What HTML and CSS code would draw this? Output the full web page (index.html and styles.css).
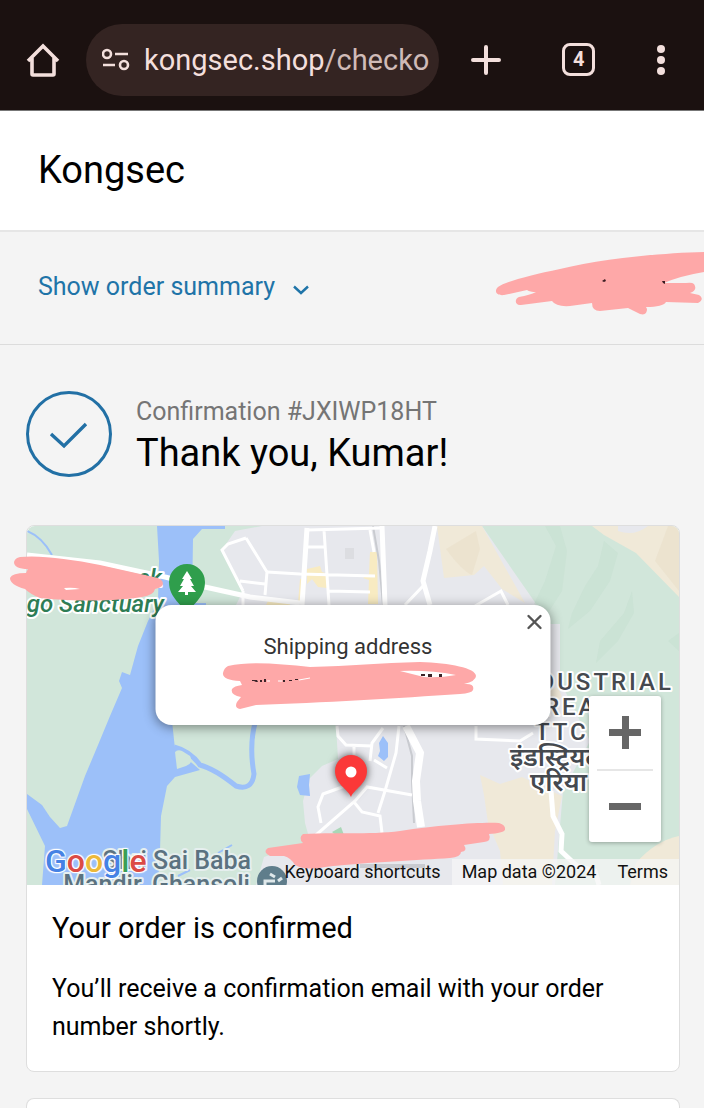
FILE: index.html
```html
<!DOCTYPE html>
<html lang="en">
<head>
    <meta charset="UTF-8">
    <meta name="viewport" content="width=device-width, initial-scale=1.0">
    <title>Kongsec - Thank you</title>
    <link rel="stylesheet" href="styles.css">
</head>
<body>
    <nav class="browser-bar">
        <button class="icon-btn home" aria-label="Home">
            <svg width="34" height="36" viewBox="0 0 34 36"><path d="M2 19 L17 4 L32 19 M6 16 V32 Q6 33 7 33 H27 Q28 33 28 32 V16" fill="none" stroke="#f3dfdc" stroke-width="3.6"/></svg>
        </button>
        <button class="address">
            <svg width="28" height="24" viewBox="0 0 28 24" fill="none" stroke="#f3dfdc" stroke-width="2.6"><circle cx="5" cy="6" r="4"/><path d="M13 6 H26 M1 17 H13"/><circle cx="22" cy="17" r="4"/></svg>
            <span>kongsec.shop<span class="path">/checko</span></span>
        </button>
        <div class="actions">
            <button class="icon-btn" aria-label="New tab">
                <svg width="30" height="30" viewBox="0 0 30 30"><path d="M15 2 V28 M2 15 H28" stroke="#f3dfdc" stroke-width="4" stroke-linecap="round"/></svg>
            </button>
            <button class="icon-btn tabs" aria-label="Tabs">4</button>
            <button class="icon-btn menu" aria-label="Menu">
                <svg width="10" height="30" viewBox="0 0 10 30" fill="#f3dfdc"><circle cx="5" cy="4" r="4"/><circle cx="5" cy="15" r="4"/><circle cx="5" cy="26" r="4"/></svg>
            </button>
        </div>
    </nav>

    <header class="header">
        <h1>Kongsec</h1>
    </header>

    <section class="summary">
        <button class="summary-toggle">
            Show order summary
            <svg width="16" height="10" viewBox="0 0 16 10"><path d="M1 1.5 L8 8 L15 1.5" fill="none" stroke="#1f74a8" stroke-width="2.4"/></svg>
        </button>
        <svg class="summary-mark" width="210" height="66" viewBox="494 250 210 66">
            <path fill="#fea8a8" d="M704 252 C660 253 600 259 560 269 C530 275 505 282 498 287 C493 292 498 296 504 295 L527 290 Q530 292 536 292 Q530 295 519 297 C514 299 515 306 521 305 L552 301 Q556 307 570 306 L592 303 Q592 311 600 311 L628 308 L640 314 Q647 316 647 309 L646 307 Q663 307 666 302 L698 303 Q705 299 699 295 L690 293 Q698 290 694 284 Q692 282 686 283 L664 283 Q680 276 704 272 Z"/>
            <path fill="#391b20" d="M602 281 l3 -2 l1 2 l-2 1 z M662 281 l3 0 l0 3 l-2 -1 z"/>
        </svg>
    </section>

    <main class="main">
        <div class="thanks">
            <svg width="86" height="86" viewBox="0 0 86 86" fill="none" stroke="#2270a5" stroke-width="3"><circle cx="43" cy="43" r="41.5"/><path d="M25 43 L38 55 L60 33" stroke-width="3.4"/></svg>
            <div class="thanks-text">
                <p class="confirmation">Confirmation #JXIWP18HT</p>
                <h2>Thank you, Kumar!</h2>
            </div>
        </div>

        <div class="card">
            <div class="map">
                <svg class="map-canvas" viewBox="27 525 652 359" preserveAspectRatio="xMidYMid slice">
                    <rect x="-400" y="525" width="1500" height="359" fill="#d1e6da"/>

                    <!-- built-up area -->
                    <path fill="#e7e8ed" d="M262 525 L235 530 L222 549 L243 590 L236 604 L336 725 L338 758 L322 765 L309 778 L303 800 L305 822 L310 840 L264 856 L256 884 H555 L563 790 L590 740 L560 680 V623 H550 L482 525 Z"/>
                    <path fill="#dcdde1" d="M345 547 h9 v11 h-9 z"/>

                    <!-- hills and sand -->
                    <g fill="#f0e9d8">
                        <path d="M437 525 H482 L525 602 L502 588 L484 565 L474 574 L444 577 Z"/>
                        <path d="M592 525 L604 534 L636 552 L679 596 V525 Z"/>
                        <path d="M480 774 L500 783 L522 776 L562 795 L555 830 L552 884 H503 L500 850 L488 822 L484 794 Z"/>
                        <path d="M636 862 Q655 840 679 835 V884 H630 Z"/>
                        <path d="M549 690 L558 686 L562 696 L550 704 Z"/>
                    </g>
                    <path fill="#e7e8ed" d="M618 525 H648 Q634 536 618 530 Z"/>
                    <path fill="#eadfc9" opacity=".6" d="M668 525 L655 560 L679 590 V525 Z M446 548 Q462 570 472 574 L480 548 L476 530 Z"/>
                    <g fill="#c5dfd0" opacity=".5">
                        <path d="M545 525 L556 545 L545 580 L534 603 L548 612 L562 590 L567 550 L560 525 Z"/>
                        <path d="M604 540 L598 565 L585 585 L572 612 L568 628 L590 610 L610 580 L618 552 Z"/>
                        <path d="M632 590 L624 612 L600 640 L596 662 L618 640 L634 612 Z M668 640 L679 632 V650 Z"/>
                    </g>

                    <!-- water -->
                    <g fill="#9cc0f9">
                        <path d="M157 525 L159 560 L158 600 L148 620 L138 645 L130 674 L122 671 L119 680 L122 687 L110 715 L98 744 L85 775 L67 825 L60 827 L50 816 L42 804 L27 793 V808 L45 845 L42 884 H158 L160 850 L161 815 L167 785 L175 776 L200 769 L192 762 L175 748 L172 720 L180 604 H206 V602 H192 L193 538 L202 528 H225 V525 Z"/>
                        <path d="M299 775 L310 773 L309 784 L310 795 L300 794 L297 786 Z"/>
                        <path d="M379 742 L383 735 L388 742 L388 756 L384 760 L378 755 L380 750 Z"/>
                    </g>
                    <path fill="none" stroke="#9cc0f9" stroke-width="5" d="M174 746 Q190 750 200 764 Q215 768 236 785 Q252 790 254 773 Q249 745 255 722"/>
                    <path fill="#d1e6da" d="M175 751 Q178 748 182 750 L190 755 Q194 762 186 765 L177 768 Z"/>
                    <path fill="none" stroke="#9cc0f9" stroke-width="2" d="M27 530 Q42 536 52 554 M178 875 L190 869 M218 852 L232 844"/>

                    <g fill="#f8ebc2">
                        <path d="M307 568 L320 565 L322 571 L328 573 L327 587 L318 586 L312 578 L307 583 Z M300 578 L306 578 L304 602 L298 602 Z"/>
                        <path d="M370 551 L377 551 L378 603 L368 603 L369 579 L363 577 L369 573 Z M268 600 L290 600 L290 604 L266 604 Z"/>
                    </g>
                    <path fill="#a9d7b7" d="M332 831 L341 826 L344 834 L338 836 Z"/>

                    <!-- roads -->
                    <g fill="none" stroke="#c9cbd0" stroke-width="2">
                        <path d="M373 525 L379 560 L383 604 M404 725 L412 755 L412 780 L414 822"/>
                        <path d="M360 865 H425" stroke-width="4"/>
                    </g>
                    <g fill="none" stroke="#fff" stroke-width="3">
                        <path d="M307 529 L382 527 M324 529 L329 604 M307 546 H326 M267 571 L300 573 L375 575 M329 590 L370 591 M370 529 L374 551"/>
                        <path d="M246 537 L228 543 L222 549 L243 590 M246 537 L267 571 L265 594 M240 580 L265 583 M243 590 V604"/>
                        <path d="M423 585 L405 604 M475 605 L501 590 L508 604 M476 725 V738 L520 740 L533 732"/>
                        <path d="M337 725 L338 735 L346 744 L372 745 M354 745 V757 M370 760 L372 742 L383 727 M374 759 L387 767"/>
                        <path d="M399 725 L396 752 L385 790 L378 812 M316 834 L355 800 L367 786 L412 794 M321 822 L318 806 L323 793 L345 785 M354 801 L362 811 L380 815 L382 832"/>
                    </g>
                    <g fill="none" stroke="#fff" stroke-width="5">
                        <path d="M27 554 L100 562 L165 576 L205 586 L250 596 L300 602"/>
                        <path d="M307 527 L302 604 M382 525 L385 604 M435 525 L430 550 L423 580 L430 604"/>
                        <path d="M551 790 L553 815 L562 833 L561 850 L577 865 L595 870 L599 884"/>
                        <path d="M406 725 L420 752 L416 780 L417 800 L421 826" stroke-width="8"/>
                    </g>

                    <!-- place labels -->
                    <g class="label park">
                        <text x="162" y="585" text-anchor="end">ek</text>
                        <text x="164" y="611" text-anchor="end">go Sanctuary</text>
                    </g>
                    <g class="label temple">
                        <text x="251" y="868" text-anchor="end">Shri Sai Baba</text>
                        <text x="250" y="892" text-anchor="end">Mandir, Ghansoli</text>
                    </g>
                    <g class="label area">
                        <text x="674" y="689" text-anchor="end">INDUSTRIAL</text>
                        <text x="525" y="714">AREA</text>
                        <text x="535" y="739">TTC</text>
                        <text class="hindi" x="510" y="765">इंडस्ट्रियल</text>
                        <text class="hindi" x="530" y="790">एरिया</text>
                    </g>

                    <!-- park and temple symbols -->
                    <path fill="#2f9e4c" d="M187 614 C184 604 169 598 169 581 A18 18 0 0 1 205 581 C205 598 190 604 187 614 Z"/>
                    <path fill="#fff" d="M187 570 L192 578 H190 L194 585 H191 L196 591 H188 V594 H185 V591 H178 L183 585 H180 L184 578 H182 Z"/>
                    <circle cx="272" cy="880" r="15" fill="#5f7d8b"/>
                    <path fill="none" stroke="#dfe8ea" stroke-width="3" d="M265 884 V880 H275 M270 873 L275 876 M278 880 L282 877"/>

                    <!-- drop pin -->
                    <g class="pin">
                        <path fill="#fb3838" d="M351 796 C348 788 335 783 335 770 A16 16 0 0 1 367 770 C367 783 354 788 351 796 Z"/>
                        <circle cx="351" cy="771" r="5.5" fill="#fff"/>
                    </g>
                </svg>

                <div class="google"><span class="blue">G</span><span class="red">o</span><span class="yellow">o</span><span class="blue">g</span><span class="green">l</span><span class="red">e</span></div>

                <div class="zoom">
                    <button aria-label="Zoom in"><svg width="32" height="33" viewBox="0 0 32 33"><path fill="#666" d="M13 0 h7 v13 h12 v7 h-12 v13 h-7 v-13 h-13 v-7 h13 z"/></svg></button>
                    <button aria-label="Zoom out"><svg width="32" height="33" viewBox="0 0 32 33"><path fill="#666" d="M0 13 h32 v7 h-32 z"/></svg></button>
                </div>

                <div class="attribution">
                    <button>Keyboard shortcuts</button>
                    <span>Map data ©2024</span>
                    <a href="#">Terms</a>
                </div>

                <div class="popup">
                    <p>Shipping address</p>
                    <button class="close" aria-label="Close">
                        <svg width="16" height="16" viewBox="0 0 16 16"><path d="M2 2 L14 14 M14 2 L2 14" stroke="#555" stroke-width="2.4" stroke-linecap="round"/></svg>
                    </button>
                </div>
            </div>

            <svg class="marks" viewBox="27 525 652 359" preserveAspectRatio="xMidYMid slice">
                <g fill="#fea8a8">
                    <path d="M20 556 C40 554 70 558 100 564 L158 577 Q165 580 162 585 Q160 587 155 588 Q154 594 142 596 C120 600 80 601 40 597 Q30 593 25 588 Q10 584 10 577 Q12 572 26 572 L28 568 Q14 568 14 561 Q15 557 20 556 Z"/>
                    <path d="M228 665 C250 660 280 663 310 666 C350 665 380 662 420 661 C450 662 476 667 476 675 Q476 680 464 683 Q475 682 473 689 Q472 692 460 693 C400 697 320 702 256 704 L240 708 Q234 707 237 701 L241 696 Q230 694 232 688 Q234 685 242 684 L240 680 Q222 679 223 672 Q224 667 228 665 Z"/>
                    <path d="M268 847 L303 842 Q298 837 303 833 C330 831 370 834 400 830 C440 824 480 821 499 822 Q506 824 505 829 Q503 832 489 833 Q492 840 484 841 L464 844 Q468 850 461 851 Q461 856 450 857 C420 859 370 861 325 866 Q305 870 295 864 Q291 857 284 855 L270 855 Q262 851 268 847 Z"/>
                </g>
                <path fill="#fff" d="M400 670 Q430 669 456 674 Q440 677 424 676 Z M64 587 Q73 586 80 588 L66 589 Z"/>
                <g fill="#3b2328">
                    <path d="M252 679 h5 l1 2 h-2 l-2 -1 h-2 z M260 679 h2 v2 h-2 z M264 678 h2 v3 h-2 z M283 679 h2 v2 h-2 z M289 679 h3 v1 h-3 z M295 678 h3 v1 h-3 z"/>
                    <path d="M421 673 h4 v2 h-4 z M428 673 h4 v3 h-4 z M439 673 h3 v3 h-3 z"/>
                </g>
                <path fill="none" stroke="#fff" d="M267 680 H270 M278 680 H282 M299 679 L310 677"/>
            </svg>

            <div class="card-body">
                <h3>Your order is confirmed</h3>
                <p>You’ll receive a confirmation email with your order number shortly.</p>
            </div>
        </div>

        <div class="card next"></div>
    </main>
</body>
</html>
```
FILE: styles.css
```css
* {
    margin: 0;
    padding: 0;
    box-sizing: border-box;
}

body {
    display: flex;
    flex-direction: column;
    min-height: 100vh;
    background: #f4f4f4;
    color: #000;
    font-family: Roboto, sans-serif;
    font-size: 25px;
    overflow-x: hidden;
}

button {
    background: none;
    border: none;
    color: inherit;
    font: inherit;
    cursor: pointer;
}

svg {
    display: block;
}

h1, h2, h3 {
    font-weight: 400;
}

/* Browser toolbar */
.browser-bar {
    display: flex;
    align-items: center;
    gap: 26px;
    height: 111px;
    padding: 9px 38px 0 26px;
    background: #1b1110;
    border-bottom: 1px solid #777;
}

.address {
    display: flex;
    align-items: center;
    gap: 14px;
    height: 72px;
    padding: 0 10px 0 16px;
    border-radius: 36px;
    background: #342422;
    color: #f3dfdc;
    font-size: 29px;
    white-space: nowrap;
}

.address .path {
    color: #d0bbb8;
}

.actions {
    flex: 1;
    display: flex;
    align-items: center;
    justify-content: space-between;
    padding-left: 6px;
}

.tabs {
    width: 33px;
    height: 33px;
    border: 3px solid #f3dfdc;
    border-radius: 8px;
    color: #f3dfdc;
    font-size: 20px;
    font-weight: 700;
    line-height: 27px;
}

/* Store header */
.header {
    height: 121px;
    padding: 37px 38px;
    background: #fff;
    border-bottom: 2px solid #e6e6e6;
}

.header h1 {
    font-size: 38px;
    line-height: 44px;
}

.summary {
    position: relative;
    height: 113px;
    padding: 38px;
    border-bottom: 1px solid #dcdcdc;
}

.summary-toggle {
    display: flex;
    align-items: center;
    gap: 18px;
    color: #1f74a8;
    font-size: 25px;
    line-height: 34px;
}

.summary-toggle svg {
    margin-top: 6px;
}

.summary-mark {
    position: absolute;
    top: 18px;
    right: 0;
}

/* Content */
.main {
    flex: 1;
    display: flex;
    flex-direction: column;
    padding: 45px 24px 0 26px;
}

.thanks {
    display: flex;
    align-items: center;
    gap: 24px;
    margin-bottom: 47px;
}

.thanks-text {
    padding-top: 6px;
}

.confirmation {
    color: #757575;
    font-size: 25px;
    line-height: 32px;
}

.thanks h2 {
    font-size: 38px;
    line-height: 50px;
}

.card {
    position: relative;
    margin-bottom: 26px;
    background: #fff;
    border: 1px solid #dedede;
    border-radius: 8px;
}

.card.next {
    flex: 1;
    min-height: 11px;
    margin-bottom: 0;
    border-bottom: none;
    border-radius: 8px 8px 0 0;
}

.card-body {
    padding: 24px 25px 25px;
}

.card-body h3 {
    margin-bottom: 23px;
    font-size: 29px;
    line-height: 38px;
}

.card-body p {
    line-height: 38px;
}

/* Map */
.map {
    position: relative;
    height: 359px;
    overflow: hidden;
    border-radius: 8px 8px 0 0;
}

.map-canvas {
    width: 100%;
    height: 100%;
}

.marks {
    position: absolute;
    top: 0;
    left: 0;
    width: 100%;
    height: 359px;
    overflow: visible;
    pointer-events: none;
}

.label {
    paint-order: stroke;
    stroke: #fff;
    stroke-width: 4px;
    stroke-linejoin: round;
    font-weight: 500;
}

.park {
    fill: #2e7d55;
    font-size: 24px;
    font-style: italic;
}

.temple {
    fill: #5b7280;
    stroke: #e6efef;
    font-size: 25px;
}

.area {
    fill: #45494f;
    font-size: 24px;
    letter-spacing: 3px;
}

.hindi {
    font-family: "Noto Sans", sans-serif;
    font-size: 26px;
    font-weight: 600;
    letter-spacing: 0;
}

.pin {
    filter: drop-shadow(0 0 4px rgba(0, 0, 0, 0.7));
}

.google {
    position: absolute;
    bottom: 5px;
    left: 18px;
    font-size: 32px;
    font-weight: 500;
    line-height: 38px;
    text-shadow: 0 0 2px #fff, 1px 1px 1px #fff, -1px -1px 1px #fff, 1px -1px 1px #fff, -1px 1px 1px #fff;
}

.blue {
    color: #4682e4;
}

.red {
    color: #db4b45;
}

.yellow {
    color: #ecb93a;
}

.green {
    color: #3a9f55;
}

.zoom {
    position: absolute;
    right: 18px;
    bottom: 43px;
    width: 72px;
    padding: 0 8px;
    background: #fff;
    border-radius: 3px;
    box-shadow: 0 1px 4px rgba(0, 0, 0, 0.3);
}

.zoom button {
    display: flex;
    align-items: center;
    justify-content: center;
    width: 100%;
    height: 73px;
}

.zoom button + button {
    border-top: 2px solid #e6e6e6;
}

.attribution {
    position: absolute;
    right: 0;
    bottom: 0;
    display: flex;
    height: 26px;
    font-size: 18px;
    line-height: 26px;
}

.attribution > * {
    padding: 0 11px 0 10px;
    background: rgba(245, 245, 245, 0.75);
    color: #111;
    text-decoration: none;
}

.attribution > button {
    background: none;
}

.popup {
    position: absolute;
    top: 79px;
    left: 50%;
    width: 395px;
    height: 120px;
    padding: 26px 10px 0 0;
    transform: translateX(-50%);
    background: #fff;
    border-radius: 16px;
    box-shadow: 0 2px 12px rgba(0, 0, 0, 0.45);
    color: #333;
    font-size: 22px;
    line-height: 32px;
    text-align: center;
}

.close {
    position: absolute;
    top: 9px;
    right: 8px;
}
```
